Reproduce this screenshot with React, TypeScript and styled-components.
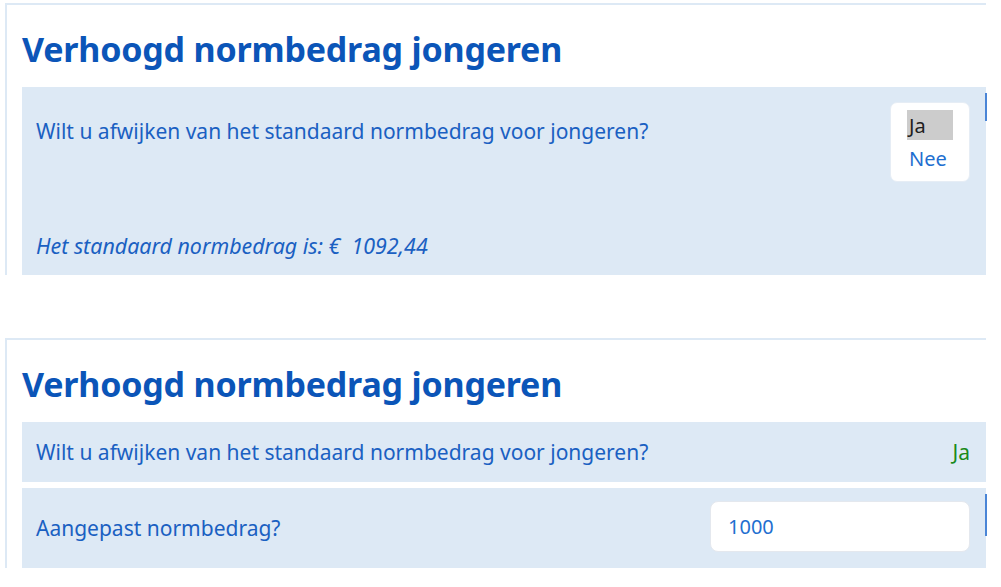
import styled, { createGlobalStyle } from 'styled-components';

const GlobalStyle = createGlobalStyle`
  html, body {
    margin: 0;
    padding: 0;
    background: #ffffff;
  }
  body {
    font-family: 'Noto Sans', 'Open Sans', sans-serif;
    color: #1a60c2;
  }
`;

const Page = styled.div`
  display: flex;
  flex-direction: column;
  gap: 63px;
  padding: 3px 0 0 5px;
`;

const Card = styled.section`
  width: 964px;
  border-top: 2px solid #dde9f5;
  border-left: 2px solid #dde9f5;
  padding: 0 0 0 15px;
`;

const Title = styled.h2`
  margin: 0;
  padding: 20px 0 13px;
  font-size: 34px;
  line-height: 49px;
  font-weight: 700;
  color: #0b55b8;
  letter-spacing: -0.2px;
`;

const Panel = styled.div`
  position: relative;
  background: #dde9f5;
  padding: 15px 16px 15px 14px;
  display: flex;
  flex-direction: column;
  gap: 50px;
`;

const Row = styled.div<{ $height: number }>`
  position: relative;
  display: flex;
  align-items: center;
  justify-content: space-between;
  background: #dde9f5;
  height: ${(p) => p.$height}px;
  padding: 0 16px 0 14px;
  & + & {
    margin-top: 6px;
  }
`;

const Sliver = styled.span<{ $top: number; $height: number }>`
  position: absolute;
  right: -1px;
  top: ${(p) => p.$top}px;
  width: 2px;
  height: ${(p) => p.$height}px;
  background: #4a85d6;
`;

const QuestionLine = styled.div`
  display: flex;
  justify-content: space-between;
  align-items: flex-start;
`;

const Label = styled.span<{ $offset?: number }>`
  font-size: 21px;
  line-height: 28px;
  color: #1a60c2;
  margin-top: ${(p) => p.$offset ?? 0}px;
`;

const Note = styled.span`
  font-size: 21.4px;
  line-height: 28px;
  font-style: italic;
  color: #1a60c2;
  white-space: pre;
`;

const ListBox = styled.div`
  width: 80px;
  height: 80px;
  box-sizing: border-box;
  background: #ffffff;
  border: 1px solid #e6edf5;
  border-radius: 7px;
  padding: 7px 16px 0;
  display: flex;
  flex-direction: column;
  gap: 3px;
`;

const Option = styled.div<{ $selected?: boolean }>`
  height: 30px;
  line-height: 31px;
  padding-left: 2px;
  font-size: 20px;
  color: ${(p) => (p.$selected ? '#1e1e1e' : '#1f6fd0')};
  background: ${(p) => (p.$selected ? '#cccccc' : 'transparent')};
`;

const Answer = styled.span`
  font-size: 21px;
  color: #1a8a1a;
`;

const Input = styled.input`
  align-self: flex-start;
  margin-top: 13px;
  width: 260px;
  height: 51px;
  box-sizing: border-box;
  border: 1px solid #e4e8ee;
  border-radius: 8px;
  background: #ffffff;
  padding: 0 17px;
  font-family: 'Noto Sans', 'Open Sans', sans-serif;
  font-size: 20px;
  color: #1f6fd0;
  outline: none;
`;

export default function App() {
  return (
    <>
      <GlobalStyle />
      <Page>
        <Card>
          <Title>Verhoogd normbedrag jongeren</Title>
          <Panel>
            <Sliver $top={6} $height={28} />
            <QuestionLine>
              <Label $offset={15}>Wilt u afwijken van het standaard normbedrag voor jongeren?</Label>
              <ListBox>
                <Option $selected>Ja</Option>
                <Option>Nee</Option>
              </ListBox>
            </QuestionLine>
            <Note>{'Het standaard normbedrag is: €  1092,44'}</Note>
          </Panel>
        </Card>
        <Card>
          <Title>Verhoogd normbedrag jongeren</Title>
          <Row $height={60}>
            <Label>Wilt u afwijken van het standaard normbedrag voor jongeren?</Label>
            <Answer>Ja</Answer>
          </Row>
          <Row $height={80}>
            <Sliver $top={6} $height={42} />
            <Label>Aangepast normbedrag?</Label>
            <Input defaultValue="1000" />
          </Row>
        </Card>
      </Page>
    </>
  );
}
